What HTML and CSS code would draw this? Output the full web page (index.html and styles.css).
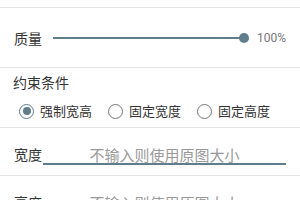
FILE: index.html
```html
<!DOCTYPE html>
<html lang="zh-CN">
<head>
    <meta charset="UTF-8">
    <meta name="viewport" content="width=device-width, initial-scale=1.0">
    <title>图片压缩设置</title>
    <link rel="stylesheet" href="styles.css">
</head>
<body>
    <div class="prev-section"></div>

    <div class="row quality-row">
        <span class="label">质量</span>
        <div class="slider">
            <div class="slider__track"></div>
            <div class="slider__thumb"></div>
        </div>
        <span class="slider__value">100%</span>
    </div>

    <div class="section">
        <div class="section__title">约束条件</div>
        <div class="radio-group">
            <label class="radio radio--checked"><span class="radio__circle"></span>强制宽高</label>
            <label class="radio"><span class="radio__circle"></span>固定宽度</label>
            <label class="radio"><span class="radio__circle"></span>固定高度</label>
        </div>
    </div>

    <div class="row field-row">
        <span class="label">宽度</span>
        <input class="field" type="text" placeholder="不输入则使用原图大小">
    </div>

    <div class="row field-row">
        <span class="label">高度</span>
        <input class="field" type="text" placeholder="不输入则使用原图大小">
    </div>
</body>
</html>
```

FILE: styles.css
```css
:root {
    --accent: #607d8b;
    --divider: #e3e3e3;
    --text: #333;
    --muted: #777;
}

* {
    box-sizing: border-box;
    margin: 0;
    padding: 0;
}

body {
    font-family: "Noto Sans CJK SC", "Noto Sans", sans-serif;
    background: #fff;
    color: var(--text);
    width: 300px;
    overflow: hidden;
}

.prev-section {
    height: 8px;
    border-bottom: 1px solid var(--divider);
}

.row {
    display: flex;
    align-items: center;
    padding: 0 14px;
    border-bottom: 1px solid var(--divider);
}

.label {
    font-size: 14px;
    line-height: 20px;
    width: 28px;
    flex-shrink: 0;
}

.quality-row {
    height: 60px;
}

.slider {
    flex: 1;
    display: flex;
    align-items: center;
    margin-left: 11px;
}

.slider__track {
    flex: 1;
    height: 2px;
    background: var(--accent);
}

.slider__thumb {
    width: 10px;
    height: 10px;
    border-radius: 50%;
    background: var(--accent);
    margin-left: -5px;
}

.slider__value {
    margin-left: 8px;
    font-family: Roboto, sans-serif;
    font-size: 12px;
    color: var(--muted);
}

.section {
    height: 60px;
    padding: 4px 14px 0 13px;
    border-bottom: 1px solid var(--divider);
}

.section__title {
    font-size: 14px;
    line-height: 20px;
}

.radio-group {
    display: flex;
    gap: 16px;
    margin-top: 9px;
    padding-left: 6px;
}

.radio {
    display: flex;
    align-items: center;
    gap: 6px;
    font-size: 13px;
    line-height: 20px;
    color: var(--text);
}

.radio__circle {
    width: 15px;
    height: 15px;
    border-radius: 50%;
    border: 1.5px solid var(--muted);
    display: flex;
    align-items: center;
    justify-content: center;
}

.radio--checked .radio__circle {
    border-color: var(--accent);
}

.radio--checked .radio__circle::after {
    content: "";
    width: 8px;
    height: 8px;
    border-radius: 50%;
    background: var(--accent);
}

.field-row {
    height: 48px;
    padding-top: 5px;
}

.field {
    flex: 1;
    height: 19px;
    margin-left: 1px;
    margin-top: 3px;
    border: none;
    border-bottom: 2px solid var(--accent);
    outline: none;
    font-family: inherit;
    font-size: 15px;
    text-align: center;
    color: var(--text);
    background: transparent;
}

.field::placeholder {
    color: #9a9a9a;
}
```
